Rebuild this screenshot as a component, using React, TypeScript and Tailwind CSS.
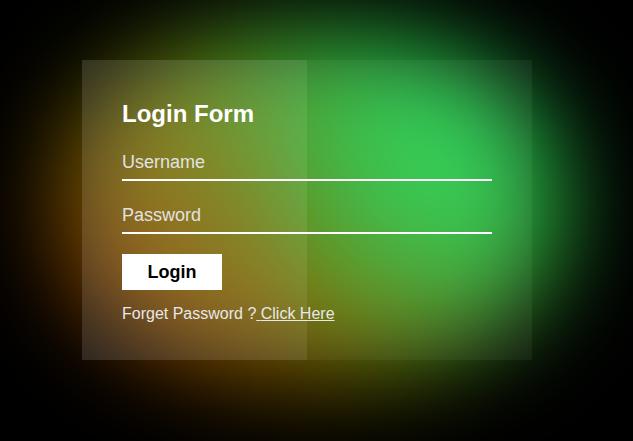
import React from "react";

export default function App() {
  return (
    <div className="relative h-[441px] w-[633px] overflow-hidden bg-black font-['Liberation_Sans',Arial,sans-serif]">
      {/* soft glow behind the card */}
      <div className="pointer-events-none absolute left-[58px] top-[30px] h-[350px] w-[505px] rounded-[45%] bg-[radial-gradient(circle_at_75%_36%,#28dc58_0%,rgba(40,200,80,0.6)_22%,transparent_45%),linear-gradient(225deg,#1a9a3c_12%,#40a02c_36%,#787000_60%,#8a4000_84%)] blur-[48px]" />

      <div className="relative flex h-full w-full items-start pl-[82px] pt-[60px]">
        <div className="flex h-[300px] w-[450px] flex-col bg-[linear-gradient(to_right,rgba(255,255,255,0.13)_50%,rgba(255,255,255,0.05)_50%)] px-10 pt-10">
          <h2 className="text-2xl leading-[28px] font-bold text-white">Login Form</h2>
          <input
            type="text"
            placeholder="Username"
            className="mt-[18px] h-[35px] w-[370px] border-b-2 border-white bg-transparent text-lg leading-normal text-white outline-none placeholder:text-[#e2e2e2]"
          />
          <input
            type="password"
            placeholder="Password"
            className="mt-[18px] h-[35px] w-[370px] border-b-2 border-white bg-transparent text-lg leading-normal text-white outline-none placeholder:text-[#e2e2e2]"
          />
          <button className="mt-5 h-9 w-[100px] bg-white text-lg font-bold text-black">
            Login
          </button>
          <p className="mt-3 text-base leading-6 text-[#e8e8e8]">
            Forget Password ?
            <a href="#" className="underline">
              {" "}Click Here
            </a>
          </p>
        </div>
      </div>
    </div>
  );
}
